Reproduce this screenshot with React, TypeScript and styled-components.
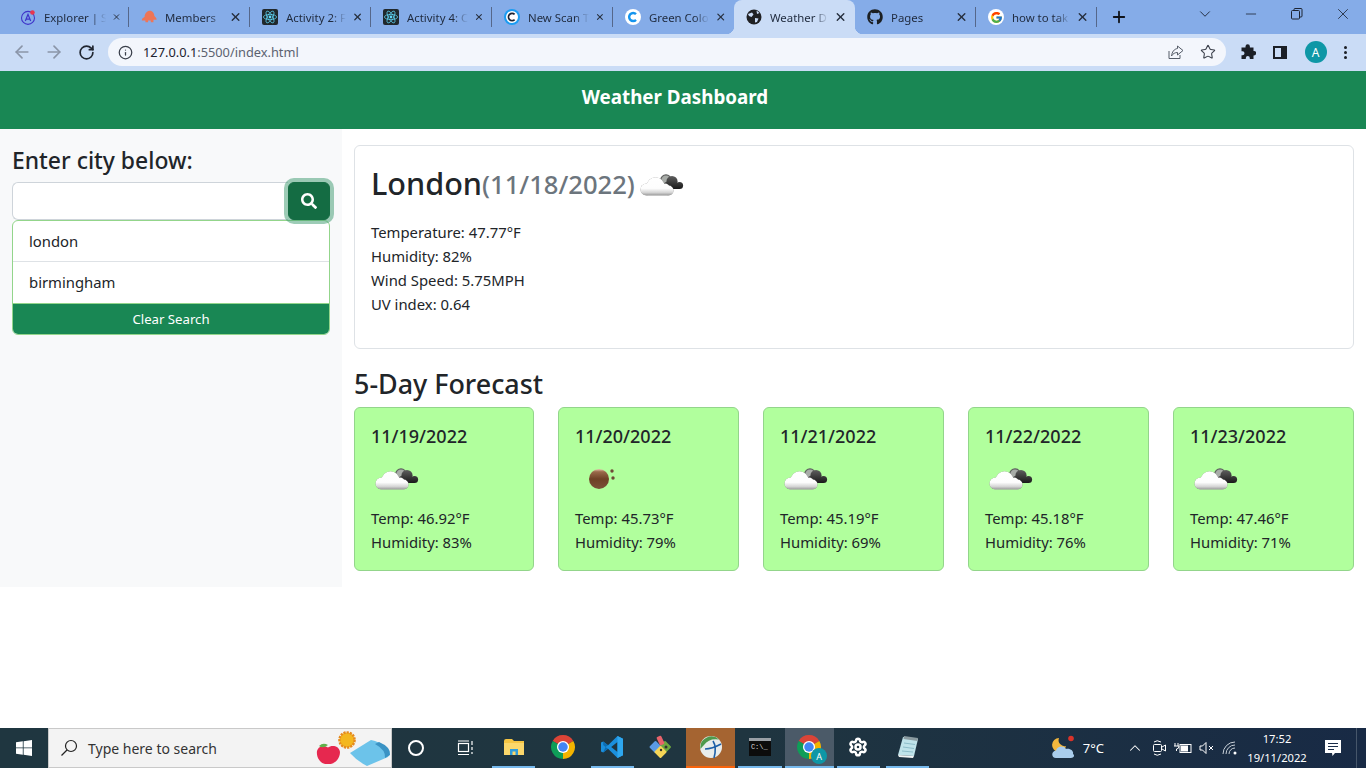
import * as React from 'react';
import styled, { createGlobalStyle } from 'styled-components';
import { ArrowLeft, ArrowRight, ChevronDown, ChevronUp, Info, Minus, Plus, RotateCw, Settings, Star, X } from 'lucide-react';
import { FaGithub, FaSearch } from 'react-icons/fa';
import { FcGoogle } from 'react-icons/fc';

const BODY_FONT = `'Noto Sans', 'Open Sans', sans-serif`;

const GlobalStyle = createGlobalStyle`
  html, body { margin: 0; padding: 0; }
  body { font-family: ${BODY_FONT}; color: #212529; background: #fff; overflow: hidden; }
  * { box-sizing: border-box; }
`;

const tabs = [
  { title: 'Explorer | S', icon: 'apollo', sep: true },
  { title: 'Members', icon: 'blob', sep: true },
  { title: 'Activity 2: F', icon: 'react', sep: true },
  { title: 'Activity 4: C', icon: 'react', sep: true },
  { title: 'New Scan T', icon: 'scan', sep: true },
  { title: 'Green Colo', icon: 'coolors' },
  { title: 'Weather D', icon: 'globe', active: true },
  { title: 'Pages', icon: 'github', sep: true },
  { title: 'how to tak', icon: 'google', sep: true },
];

const forecast = [
  { date: '11/19/2022', temp: '46.92', humidity: '83', icon: 'cloud' },
  { date: '11/20/2022', temp: '45.73', humidity: '79', icon: 'ball' },
  { date: '11/21/2022', temp: '45.19', humidity: '69', icon: 'cloud' },
  { date: '11/22/2022', temp: '45.18', humidity: '76', icon: 'cloud' },
  { date: '11/23/2022', temp: '47.46', humidity: '71', icon: 'cloud' },
];

const CloudIcon: React.FC<{ id: string }> = ({ id }) => (
  <WeatherSvg viewBox="0 0 50 50">
    <defs>
      <linearGradient id={`white-${id}`} gradientUnits="userSpaceOnUse" x1="0" y1="15" x2="0" y2="34">
        <stop offset="0" stopColor="#ffffff" />
        <stop offset="0.6" stopColor="#fdfdfd" />
        <stop offset="0.82" stopColor="#d4d4d4" />
        <stop offset="0.93" stopColor="#a9a9a9" />
        <stop offset="1" stopColor="#d6d6d6" />
      </linearGradient>
      <linearGradient id={`dark-${id}`} gradientUnits="userSpaceOnUse" x1="0" y1="14" x2="0" y2="28">
        <stop offset="0" stopColor="#5e5e5e" />
        <stop offset="1" stopColor="#141414" />
      </linearGradient>
    </defs>
    <circle cx="30" cy="18" r="5.2" fill="#a8aca8" stroke="#5f5f5f" strokeWidth="1.2" />
    <g fill={`url(#dark-${id})`}>
      <circle cx="36" cy="19.5" r="5.6" />
      <circle cx="43.5" cy="23.5" r="3.6" />
      <circle cx="31" cy="23.5" r="3.5" />
      <rect x="31" y="21" width="12.5" height="6" />
    </g>
    <CloudBody fill={`url(#white-${id})`}>
      <circle cx="10.5" cy="27.5" r="6" />
      <circle cx="19.5" cy="24" r="8.8" />
      <circle cx="29" cy="26" r="4.6" />
      <circle cx="32.5" cy="28.5" r="5" />
      <rect x="10.5" y="26" width="22" height="7.5" />
    </CloudBody>
  </WeatherSvg>
);

const BallIcon: React.FC = () => (
  <WeatherSvg viewBox="0 0 50 50">
    <defs>
      <linearGradient id="ball" x1="0" y1="0" x2="0" y2="1">
        <stop offset="0" stopColor="#e6c3ac" />
        <stop offset="0.14" stopColor="#9a6a4a" />
        <stop offset="0.5" stopColor="#6e4126" />
        <stop offset="1" stopColor="#7b5138" />
      </linearGradient>
    </defs>
    <circle cx="24" cy="23" r="10" fill="url(#ball)" />
    <circle cx="37" cy="15" r="1.7" fill="#6e4a35" />
    <circle cx="38" cy="22" r="1.7" fill="#6e4a35" />
  </WeatherSvg>
);

const ChromeLogo: React.FC<{ size: number }> = ({ size }) => (
  <svg width={size} height={size} viewBox="0 0 24 24">
    <path d="M12 12 L2.47 6.5 A11 11 0 0 1 21.53 6.5 Z" fill="#db4437" />
    <path d="M12 12 L21.53 6.5 A11 11 0 0 1 12 23 Z" fill="#f4b400" />
    <path d="M12 12 L12 23 A11 11 0 0 1 2.47 6.5 Z" fill="#0f9d58" />
    <circle cx="12" cy="12" r="5.6" fill="#fff" />
    <circle cx="12" cy="12" r="4.4" fill="#4285f4" />
  </svg>
);

const Favicon: React.FC<{ kind: string }> = ({ kind }) => {
  switch (kind) {
    case 'apollo':
      return (
        <svg width="18" height="18" viewBox="0 0 18 18">
          <circle cx="9" cy="10" r="7.3" fill="none" stroke="#3f35c9" strokeWidth="1.2" />
          <path d="M6 13.5 L9 6 L12 13.5 M7 11.3 H11" fill="none" stroke="#3f35c9" strokeWidth="1.4" />
          <circle cx="14" cy="4" r="2.6" fill="#e8364f" />
        </svg>
      );
    case 'blob':
      return (
        <svg width="18" height="16" viewBox="0 0 18 16">
          <path d="M1 12 C1 9 3 9 4 8 C4 3 8 1 10 1 C13 1 15 4 15 7 C16 8 17.5 9 17.5 11 L14 11 L14 14 L11 14 L11 12 L8 12 L8 14 L5 14 L5 12 Z" fill="#ee7557" />
        </svg>
      );
    case 'react':
      return (
        <svg width="16" height="16" viewBox="0 0 16 16">
          <rect width="16" height="16" rx="2" fill="#20282c" />
          <circle cx="8" cy="8" r="1.4" fill="#61dafb" />
          <g fill="none" stroke="#61dafb" strokeWidth="0.7">
            <ellipse cx="8" cy="8" rx="6.6" ry="2.6" />
            <ellipse cx="8" cy="8" rx="6.6" ry="2.6" transform="rotate(60 8 8)" />
            <ellipse cx="8" cy="8" rx="6.6" ry="2.6" transform="rotate(120 8 8)" />
          </g>
        </svg>
      );
    case 'scan':
      return (
        <svg width="16" height="16" viewBox="0 0 16 16">
          <circle cx="8" cy="8" r="8" fill="#1b9cf2" />
          <circle cx="8" cy="8" r="6" fill="#fff" />
          <path d="M10.6 5.4 A3.6 3.6 0 1 0 10.6 10.6" fill="none" stroke="#1c2333" strokeWidth="1.8" />
        </svg>
      );
    case 'coolors':
      return (
        <svg width="16" height="16" viewBox="0 0 16 16">
          <circle cx="8" cy="8" r="8" fill="#fff" />
          <path d="M11 5.2 A4 4 0 1 0 11 10.8" fill="none" stroke="#1494ee" strokeWidth="2.4" />
        </svg>
      );
    case 'globe':
      return (
        <svg width="16" height="16" viewBox="0 0 16 16">
          <circle cx="8" cy="8" r="7.5" fill="#202124" />
          <path d="M2 5 L6 3.5 L7.5 5.5 L5.5 8 L3 7 Z M9 9 L12.5 9.5 L11 13 L9 13.5 Z M10.5 1.5 L13.5 4 L11 5 Z" fill="#cbdcf7" />
        </svg>
      );
    case 'github':
      return <FaGithub size={16} color="#1b1f23" />;
    default:
      return (
        <GoogleBadge>
          <FcGoogle size={13} />
        </GoogleBadge>
      );
  }
};

const App: React.FC = () => {
  return (
    <Screen>
      <GlobalStyle />
      <TabStrip>
        {tabs.map((tab) => (
          <Tab key={tab.title} $active={!!tab.active} $sep={!!tab.sep}>
            <Favicon kind={tab.icon} />
            <TabTitle>{tab.title}</TabTitle>
            <X size={14} strokeWidth={2.6} color="#27303f" />
          </Tab>
        ))}
        <NewTab>
          <Plus size={18} strokeWidth={2.4} color="#10131a" />
        </NewTab>
        <WindowControls>
          <WindowButton>
            <ChevronDown size={18} strokeWidth={1.2} color="#1c2433" />
          </WindowButton>
          <WindowButton>
            <Minus size={16} strokeWidth={1.2} color="#1c2433" />
          </WindowButton>
          <WindowButton>
            <svg width="12" height="12" viewBox="0 0 12 12" fill="none" stroke="#1c2433">
              <rect x="0.5" y="2.5" width="8" height="8.5" rx="1" />
              <path d="M3 2.5 V1.5 Q3 0.5 4 0.5 H10 Q11 0.5 11 1.5 V8 Q11 9 10 9 H8.5" />
            </svg>
          </WindowButton>
          <WindowButton>
            <X size={18} strokeWidth={1.1} color="#1c2433" />
          </WindowButton>
        </WindowControls>
      </TabStrip>

      <Toolbar>
        <NavButton>
          <ArrowLeft size={20} strokeWidth={2} color="#8a95a8" />
        </NavButton>
        <NavButton>
          <ArrowRight size={20} strokeWidth={2} color="#8a95a8" />
        </NavButton>
        <NavButton>
          <RotateCw size={17} strokeWidth={2.4} color="#1f2530" />
        </NavButton>
        <Omnibox>
          <Info size={15} strokeWidth={2} color="#3a3f4a" />
          <Url>
            <strong>127.0.0.1</strong>:5500/index.html
          </Url>
          <svg width="16" height="16" viewBox="0 0 16 16" fill="none" stroke="#555c68" strokeWidth="1">
            <path d="M1 7 V14.5 H12 V11" />
            <path d="M9.5 2 L15 6.5 L9.5 11 V8.5 C7 8.5 5 9.5 3.5 12 C4 8 6 5 9.5 4.5 Z" />
          </svg>
          <Star size={16} strokeWidth={1.6} color="#3a3f4a" />
        </Omnibox>
        <ProfileArea>
          <svg width="16" height="16" viewBox="0 0 16 16" fill="#1b1f26">
            <path d="M5.5 2.5 a2.2 2.2 0 0 1 4.4 0 V3.5 H13.5 V7 H14 a2.2 2.2 0 0 1 0 4.4 H13.5 V15 H9.8 V14 a2 2 0 0 0 -4 0 V15 H1.5 V11.2 H2.5 a2 2 0 0 0 0 -4 H1.5 V3.5 H5.5 Z" />
          </svg>
          <svg width="14" height="13" viewBox="0 0 14 13">
            <rect x="1" y="1" width="12" height="11" fill="none" stroke="#1b1f26" strokeWidth="2" />
            <rect x="8" y="1" width="5" height="11" fill="#1b1f26" />
          </svg>
          <Avatar>A</Avatar>
          <MenuDots>
            <i />
            <i />
            <i />
          </MenuDots>
        </ProfileArea>
      </Toolbar>

      <Page>
        <Header>Weather Dashboard</Header>
        <Content>
          <Sidebar>
            <SideTitle>Enter city below:</SideTitle>
            <SearchRow>
              <CityInput aria-label="city" />
              <SearchButton>
                <FaSearch size={16} color="#fff" />
              </SearchButton>
            </SearchRow>
            <History>
              <HistoryItem>london</HistoryItem>
              <HistoryItem $last>birmingham</HistoryItem>
              <ClearButton>Clear Search</ClearButton>
            </History>
          </Sidebar>
          <Main>
            <TodayCard>
              <CityTitle>
                London<CityDate>(11/18/2022)</CityDate>
                <CloudIcon id="today" />
              </CityTitle>
              <StatLine>Temperature: 47.77°F</StatLine>
              <StatLine>Humidity: 82%</StatLine>
              <StatLine>Wind Speed: 5.75MPH</StatLine>
              <StatLine>UV index: 0.64</StatLine>
            </TodayCard>
            <ForecastTitle>5-Day Forecast</ForecastTitle>
            <ForecastGrid>
              {forecast.map((day) => (
                <DayCard key={day.date}>
                  <DayDate>{day.date}</DayDate>
                  {day.icon === 'ball' ? <BallIcon /> : <CloudIcon id={day.date} />}
                  <StatLine>Temp: {day.temp}°F</StatLine>
                  <StatLine>Humidity: {day.humidity}%</StatLine>
                </DayCard>
              ))}
            </ForecastGrid>
          </Main>
        </Content>
      </Page>

      <Taskbar>
        <StartButton>
          <svg width="16" height="16" viewBox="0 0 16 16" fill="#fff">
            <path d="M0 2.3 L6.8 1.3 V7.5 H0 Z M7.6 1.2 L16 0 V7.5 H7.6 Z M0 8.3 H6.8 V14.7 L0 13.7 Z M7.6 8.3 H16 V16 L7.6 14.8 Z" />
          </svg>
        </StartButton>
        <SearchBox>
          <svg width="18" height="18" viewBox="0 0 18 18" fill="none" stroke="#222" strokeWidth="1.2">
            <circle cx="11" cy="7" r="5.5" />
            <path d="M7 11 L1.5 16.5" />
          </svg>
          <SearchHint>Type here to search</SearchHint>
          <svg width="76" height="38" viewBox="0 0 76 38">
            <path d="M35 24 L56 11 Q64 12 73 20 Q76 24 73 28 L52 37 Q42 32 35 24 Z" fill="#6cc3ea" />
            <path d="M64 13 Q76 18 75 26 L70 29 Q71 21 60 15 Z" fill="#3a93c4" />
            <circle cx="32" cy="11" r="7.6" fill="#f3b71f" stroke="#e58a1e" strokeWidth="2.4" strokeDasharray="2.2 1" />
            <path d="M2 22 C4 16 10 17 13 18.5 C16 16 24 16 25 23 C25 30 19 36 13 35 C6 36 1 29 2 22 Z" fill="#e6284f" />
            <path d="M4 17 Q8 13 13 16 Q8 20 4 17 Z" fill="#5fb04a" />
          </svg>
        </SearchBox>
        <SystemSlot>
          <CortanaRing />
        </SystemSlot>
        <SystemSlot $wide>
          <svg width="16" height="16" viewBox="0 0 16 16" fill="none" stroke="#fff" strokeWidth="1.2">
            <rect x="1.5" y="3.5" width="10" height="8" />
            <path d="M1 1 H12 M1 14.5 H12 M15 1 V5 M15 7 V10 M15 12 V14" />
          </svg>
        </SystemSlot>
        <AppSlot $running>
          <svg width="22" height="18" viewBox="0 0 22 18">
            <path d="M1 3 Q1 1 3 1 H9 L11 3 H21 V17 H1 Z" fill="#f6c543" />
            <path d="M1 5 H21 V17 H1 Z" fill="#fbd76b" />
            <rect x="7" y="11" width="8" height="6" fill="#2f9ddb" />
            <rect x="9.5" y="13.5" width="3" height="3.5" fill="#fbd76b" />
          </svg>
        </AppSlot>
        <AppSlot>
          <ChromeLogo size={26} />
        </AppSlot>
        <AppSlot $running>
          <svg width="24" height="24" viewBox="0 0 24 24">
            <path d="M17.5 1 L23 3.7 V20.3 L17.5 23 L8 13.8 L3.2 17.6 L1 16.4 V7.6 L3.2 6.4 L8 10.2 Z M17.5 7 L11.2 12 L17.5 17 Z" fill="#1b8fdc" />
            <path d="M17.5 1 L23 3.7 V20.3 L17.5 23 Z" fill="#2ea7ef" />
            <path d="M3.2 6.4 L8 10.2 L5.5 12 L3.2 10 Z M3.2 17.6 L5.5 12 L8 13.8 Z" fill="#0d6db3" />
          </svg>
        </AppSlot>
        <AppSlot>
          <svg width="26" height="26" viewBox="0 0 26 26">
            <rect x="12.5" y="8.5" width="9" height="9" rx="1" transform="rotate(45 17 13)" fill="#6fa83f" />
            <rect x="3" y="8.5" width="9" height="9" rx="1" transform="rotate(45 7.5 13)" fill="#5a9be6" />
            <rect x="8" y="13.5" width="9" height="9" rx="1" transform="rotate(45 12.5 18)" fill="#f5d556" />
            <rect x="10" y="2" width="5" height="9" rx="1" transform="rotate(-25 12.5 6.5)" fill="#e8636b" />
            <circle cx="18" cy="13" r="1.5" fill="#333" />
            <circle cx="13" cy="16" r="1.2" fill="#333" />
          </svg>
        </AppSlot>
        <AppSlot $flash>
          <svg width="24" height="24" viewBox="0 0 24 24">
            <circle cx="12" cy="12" r="11" fill="#e8ecec" />
            <path d="M1.5 14 A11 11 0 0 1 20 4.5 Q10 3 5 10 Q3 12 1.5 14 Z" fill="#4f9a4d" />
            <path d="M14 6 Q18 12 15 23 M6 14 Q13 14 22 9" fill="none" stroke="#1d5fa8" strokeWidth="1.6" />
          </svg>
        </AppSlot>
        <AppSlot $running>
          <ConsoleIcon>C:\_</ConsoleIcon>
        </AppSlot>
        <AppSlot $running $current>
          <ChromeBadge>
            <ChromeLogo size={26} />
            <ChromeAvatar>A</ChromeAvatar>
          </ChromeBadge>
        </AppSlot>
        <AppSlot $running>
          <Settings size={20} strokeWidth={3} color="#fff" />
        </AppSlot>
        <AppSlot $running>
          <svg width="22" height="24" viewBox="0 0 22 24">
            <path d="M6 2 L21 4 L17 21 L1 20 Z" fill="#bfe3ea" />
            <path d="M7 1 L21 3 L20.5 6 L6.5 4 Z" fill="#8a9aa0" />
            <path d="M1 20 L17 21 L16 23 L2 22 Z" fill="#f2f5f5" />
            <path d="M7 8 L18 9.5 M6 12 L17 13.5 M5 16 L16 17" stroke="#7fb3c0" strokeWidth="0.8" />
          </svg>
        </AppSlot>
        <Tray>
          <TrayWeather>
            <svg width="26" height="26" viewBox="0 0 26 26">
              <path d="M9 3 A7 7 0 1 0 16 11 A6 6 0 0 1 9 3 Z" fill="#f5b83d" />
              <path d="M6 23 C1 23 1 16 6 15.5 C7 11 14 10 16 14 C20 13 24 16 23 19 C25 20 24 23 21 23 Z" fill="#a9cdec" />
              <circle cx="21" cy="3.5" r="2.8" fill="#d9332a" />
            </svg>
            <TrayText>7°C</TrayText>
          </TrayWeather>
          <TrayIcons>
            <ChevronUp size={18} strokeWidth={1.4} color="#fff" />
            <svg width="16" height="18" viewBox="0 0 16 18" fill="none" stroke="#fff">
              <path d="M3 3 Q6 0.5 10 3 M3 15 Q6 17.5 10 15" />
              <rect x="2.5" y="5.5" width="8" height="7" rx="1" />
              <path d="M11 8 L14.5 6 V12 L11 10" />
            </svg>
            <svg width="18" height="12" viewBox="0 0 18 12" fill="none" stroke="#fff">
              <rect x="6" y="2.5" width="11" height="8" />
              <rect x="7.5" y="4" width="6" height="5" fill="#fff" />
              <path d="M1 1 V4 M4 1 V4 M0 4 H5 Q5 7 2.5 7 V9" />
            </svg>
            <svg width="16" height="14" viewBox="0 0 16 14" fill="none" stroke="#fff">
              <path d="M1 5 H3.5 L7 1.5 V12.5 L3.5 9 H1 Z" />
              <path d="M10 5 L14 9 M14 5 L10 9" />
            </svg>
            <svg width="16" height="14" viewBox="0 0 16 14" fill="none" stroke="#c8d0d8">
              <path d="M1 13 A12 12 0 0 1 13 1 M4 13 A9 9 0 0 1 13 4 M7 13 A6 6 0 0 1 13 7" />
              <circle cx="13" cy="12" r="1.5" fill="#fff" stroke="none" />
            </svg>
          </TrayIcons>
          <Clock>
            <span>17:52</span>
            <span>19/11/2022</span>
          </Clock>
          <Notifications>
            <svg width="18" height="18" viewBox="0 0 18 18">
              <path d="M1 1 H17 V14 H11 L8.5 17 L8 14 H1 Z" fill="#fff" />
              <path d="M4 4.5 H14 M4 7.5 H14 M4 10.5 H10" stroke="#1a2c48" strokeWidth="1" />
            </svg>
          </Notifications>
          <ShowDesktop />
        </Tray>
      </Taskbar>
    </Screen>
  );
};

export default App;

const Screen = styled.div`
  width: 1366px;
  height: 768px;
  display: flex;
  flex-direction: column;
  overflow: hidden;
`;

const TabStrip = styled.div`
  height: 34px;
  flex: none;
  display: flex;
  padding-left: 8px;
  background: #85ace8;
`;

const Tab = styled.div<{ $active: boolean; $sep: boolean }>`
  position: relative;
  width: 121px;
  height: 34px;
  flex: none;
  display: flex;
  align-items: center;
  padding: 0 8px 0 12px;
  border-radius: 8px 8px 0 0;
  background: ${(p) => (p.$active ? '#cadcf6' : 'transparent')};

  > svg:first-child,
  > span:first-child {
    width: 16px;
    flex: none;
    margin-right: 8px;
  }

  ${(p) =>
    p.$sep &&
    `&::after {
      content: '';
      position: absolute;
      right: 0;
      top: 7px;
      height: 20px;
      width: 1px;
      background: #55678a;
    }`}

  ${(p) =>
    p.$active &&
    `&::before {
      content: '';
      position: absolute;
      left: -8px;
      right: -8px;
      bottom: 0;
      height: 8px;
      z-index: 0;
      background:
        radial-gradient(circle at 0 0, #85ace8 8px, #cadcf6 8.5px) left / 8px 8px no-repeat,
        radial-gradient(circle at 100% 0, #85ace8 8px, #cadcf6 8.5px) right / 8px 8px no-repeat;
    }`}
`;

const TabTitle = styled.span`
  width: 62px;
  margin-right: 6px;
  white-space: nowrap;
  font-size: 11.4px;
  color: #1f2a3d;
  -webkit-mask-image: linear-gradient(to right, #000 76%, transparent 100%);
  mask-image: linear-gradient(to right, #000 76%, transparent 100%);
`;

const NewTab = styled.div`
  width: 36px;
  height: 34px;
  display: flex;
  align-items: center;
  justify-content: center;
  margin-left: 4px;
`;

const WindowControls = styled.div`
  margin-left: auto;
  display: flex;
  height: 28px;
  padding-left: 0;
`;

const WindowButton = styled.div`
  width: 46px;
  height: 28px;
  display: flex;
  align-items: center;
  justify-content: center;
`;

const Toolbar = styled.div`
  height: 37px;
  flex: none;
  display: flex;
  align-items: center;
  padding: 0 0 1px 6px;
  background: #cadcf6;
`;

const NavButton = styled.div`
  width: 32px;
  display: flex;
  justify-content: center;
`;

const Omnibox = styled.div`
  width: 1118px;
  height: 28px;
  margin-left: 6px;
  display: flex;
  align-items: center;
  gap: 16px;
  padding: 0 10px;
  border-radius: 14px;
  background: #f3f6fc;
`;

const Url = styled.div`
  flex: 1;
  margin-left: -6px;
  font-size: 12.8px;
  color: #5b6270;

  strong {
    font-weight: 400;
    color: #1c2230;
  }
`;

const ProfileArea = styled.div`
  flex: 1;
  display: flex;
  align-items: center;
  justify-content: space-between;
  padding: 0 19px 0 14px;
`;

const Avatar = styled.div`
  width: 22px;
  height: 22px;
  border-radius: 50%;
  display: flex;
  align-items: center;
  justify-content: center;
  font-size: 12px;
  color: #fff;
  background: #0e97a6;
`;

const MenuDots = styled.div`
  display: flex;
  flex-direction: column;
  gap: 2px;

  i {
    display: block;
    width: 3px;
    height: 3px;
    border-radius: 50%;
    background: #1b1f26;
  }
`;

const Page = styled.div`
  flex: 1;
  min-height: 0;
  background: #fff;
`;

const Header = styled.header`
  height: 58px;
  display: flex;
  align-items: center;
  justify-content: center;
  padding: 0 16px 6px 0;
  background: #198754;
  color: #fff;
  font-size: 18.8px;
  font-weight: 700;
`;

const Content = styled.div`
  display: flex;
  align-items: stretch;
`;

const Sidebar = styled.aside`
  width: 342px;
  flex: none;
  padding: 16px 12px;
  background: #f8f9fa;
`;

const SideTitle = styled.h4`
  height: 29px;
  margin: 0 0 8px;
  padding-top: 1px;
  font-size: 22.9px;
  font-weight: 500;
  line-height: 29px;
`;

const SearchRow = styled.div`
  display: flex;
  height: 38px;
`;

const CityInput = styled.input`
  flex: 1;
  min-width: 0;
  height: 38px;
  border: 1px solid #ced4da;
  border-right: none;
  border-radius: 6px 0 0 6px;
  background: #fff;
`;

const SearchButton = styled.button`
  width: 42px;
  height: 38px;
  display: flex;
  align-items: center;
  justify-content: center;
  border: 1px solid #146c43;
  border-radius: 6px;
  background: #146c43;
  box-shadow: 0 0 0 4px rgba(60, 153, 110, 0.5);
`;

const History = styled.div`
  display: flex;
  flex-direction: column;
  border: 1px solid #93d58b;
  border-radius: 6px;
  background: #fff;
  overflow: hidden;
`;

const HistoryItem = styled.div<{ $last?: boolean }>`
  height: 41px;
  padding: 8px 16px;
  font-size: 14.85px;
  line-height: 24px;
  border-bottom: ${(p) => (p.$last ? 'none' : '1px solid #dee2e6')};
`;

const ClearButton = styled.button`
  height: 31px;
  padding: 0;
  border: none;
  border-top: 1px solid #93d58b;
  background: #198754;
  color: #fff;
  font-family: inherit;
  font-size: 13.2px;
`;

const Main = styled.main`
  flex: 1;
  min-width: 0;
  padding: 16px 12px;
`;

const TodayCard = styled.section`
  height: 204px;
  padding: 16px;
  border: 1px solid #dee2e6;
  border-radius: 6px;
  background: #fff;
`;

const CityTitle = styled.h2`
  height: 50px;
  margin: 0 0 8px;
  display: flex;
  align-items: flex-start;
  font-size: 30.6px;
  line-height: 43px;
  font-weight: 500;
`;

const CityDate = styled.span`
  margin-top: 1px;
  margin-right: 1px;
  font-size: 25.6px;
  font-weight: 500;
  color: #6c757d;
`;

const StatLine = styled.div`
  height: 24px;
  font-size: 14.85px;
  line-height: 24px;
`;

const ForecastTitle = styled.h3`
  height: 34px;
  margin: 16px 0 8px;
  padding-top: 1px;
  font-size: 26.9px;
  font-weight: 500;
  line-height: 36px;
`;

const ForecastGrid = styled.div`
  display: grid;
  grid-template-columns: 180px 181px 181px 181px 181px;
  gap: 24px;
`;

const DayCard = styled.article`
  height: 164px;
  padding: 16px;
  border: 1px solid #93d58b;
  border-radius: 6px;
  background: #b1ff9d;
`;

const DayDate = styled.h5`
  margin: 0 0 8px;
  height: 24px;
  font-size: 18px;
  font-weight: 500;
  line-height: 24px;
`;

const WeatherSvg = styled.svg`
  display: block;
  width: 50px;
  height: 50px;
  flex: none;
`;

const CloudBody = styled.g`
  filter: drop-shadow(0 0 0.6px rgba(0, 0, 0, 0.45));
`;

const GoogleBadge = styled.span`
  width: 16px;
  height: 16px;
  display: inline-flex;
  align-items: center;
  justify-content: center;
  border-radius: 50%;
  background: #fff;
`;

const Taskbar = styled.footer`
  height: 40px;
  flex: none;
  display: flex;
  background: linear-gradient(to right, #1f3640, #1f3540 55%, #182a45);
  color: #fff;
`;

const StartButton = styled.div`
  width: 48px;
  display: flex;
  align-items: center;
  justify-content: center;
`;

const SearchBox = styled.div`
  width: 344px;
  display: flex;
  align-items: center;
  padding: 0 0 0 11px;
  background: #f3f3f3;
  border: 1px solid #c9c9c9;
`;

const SearchHint = styled.span`
  flex: 1;
  margin-left: 10px;
  font-size: 14px;
  color: #333;
`;

const SystemSlot = styled.div<{ $wide?: boolean }>`
  width: ${(p) => (p.$wide ? '49px' : '48px')};
  display: flex;
  align-items: center;
  justify-content: center;
`;

const CortanaRing = styled.div`
  width: 16px;
  height: 16px;
  border: 2.5px solid #fff;
  border-radius: 50%;
`;

const AppSlot = styled.div<{ $running?: boolean; $flash?: boolean; $current?: boolean }>`
  width: 49.25px;
  flex: none;
  display: flex;
  align-items: center;
  justify-content: center;
  background: ${(p) => (p.$flash ? '#a56431' : p.$current ? '#4b5a68' : 'transparent')};
  border-bottom: 2px solid ${(p) => (p.$flash ? '#f7630c' : 'transparent')};
  ${(p) =>
    p.$running &&
    `border-image: linear-gradient(to right, transparent 4px, #76b9ed 4px, #76b9ed calc(100% - 4px), transparent calc(100% - 4px)) 1;`}
  ${(p) => p.$current && `border-image: none; border-bottom-color: #76b9ed;`}
`;

const ConsoleIcon = styled.div`
  width: 22px;
  height: 18px;
  padding: 1px 2px;
  border-top: 3px solid #9aa0a6;
  background: #0c0c0c;
  font-family: 'Liberation Mono', monospace;
  font-size: 7px;
  line-height: 10px;
  color: #ddd;
`;

const ChromeBadge = styled.div`
  position: relative;
  width: 26px;
  height: 26px;
`;

const ChromeAvatar = styled.div`
  position: absolute;
  right: -5px;
  bottom: -4px;
  width: 16px;
  height: 16px;
  border-radius: 50%;
  display: flex;
  align-items: center;
  justify-content: center;
  font-size: 9px;
  color: #fff;
  background: #0e97a6;
`;

const Tray = styled.div`
  flex: 1;
  display: flex;
  align-items: center;
  justify-content: flex-end;
`;

const TrayWeather = styled.div`
  display: flex;
  align-items: center;
  gap: 7px;
  margin-right: 22px;
`;

const TrayText = styled.span`
  font-size: 13px;
`;

const TrayIcons = styled.div`
  display: flex;
  align-items: center;
  gap: 7px;
`;

const Clock = styled.div`
  width: 62px;
  margin-left: 8px;
  display: flex;
  flex-direction: column;
  align-items: center;
  font-size: 11.2px;
  line-height: 19px;
  white-space: nowrap;
`;

const Notifications = styled.div`
  width: 46px;
  margin-left: 2px;
  display: flex;
  justify-content: center;
`;

const ShowDesktop = styled.div`
  width: 10px;
  height: 40px;
  border-left: 1px solid #46566a;
`;
